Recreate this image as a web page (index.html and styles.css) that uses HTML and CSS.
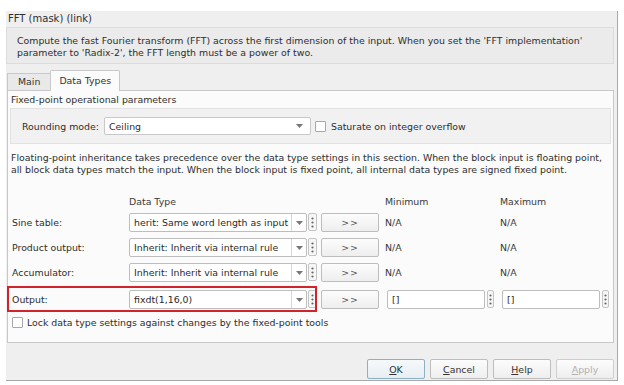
FILE: index.html
```html
<!DOCTYPE html>
<html>
<head>
<meta charset="utf-8">
<link rel="stylesheet" href="styles.css">
</head>
<body>
<div class="dialog">
  <div class="title">FFT (mask) (link)</div>
  <div class="desc">Compute the fast Fourier transform (FFT) across the first dimension of the input. When you set the 'FFT implementation'<br>parameter to 'Radix-2', the FFT length must be a power of two.</div>
  <div class="tabs">
    <div class="tab">Main</div>
    <div class="tab active">Data Types</div>
  </div>
  <div class="panel">
    <div class="section-title">Fixed-point operational parameters</div>
    <div class="group">
      <span class="label">Rounding mode:</span>
      <div class="select rounding"><span class="value">Ceiling</span><span class="arrow"><svg width="7" height="4" viewBox="0 0 7 4"><path d="M0 0h7L3.5 4z" fill="#777"/></svg></span></div>
      <label class="check"><span class="box"></span>Saturate on integer overflow</label>
    </div>
    <p class="note">Floating-point inheritance takes precedence over the data type settings in this section. When the block input is floating point,<br>all block data types match the input. When the block input is fixed point, all internal data types are signed fixed point.</p>
    <div class="dt">
      <div class="dt-row head">
        <span></span>
        <span class="col-dt">Data Type</span>
        <span></span>
        <span>Minimum</span>
        <span>Maximum</span>
      </div>
      <div class="dt-row">
        <span class="label">Sine table:</span>
        <div class="dt-cell"><div class="select"><span class="value">herit: Same word length as input</span><span class="arrow"><svg width="7" height="4" viewBox="0 0 7 4"><path d="M0 0h7L3.5 4z" fill="#777"/></svg></span></div><span class="kebab"><svg width="3" height="11" viewBox="0 0 3 11"><circle cx="1.5" cy="1.5" r="1.1" fill="#666"/><circle cx="1.5" cy="5.5" r="1.1" fill="#666"/><circle cx="1.5" cy="9.5" r="1.1" fill="#666"/></svg></span></div>
        <button class="btn assist">&gt;&gt;</button>
        <span class="na">N/A</span>
        <span class="na">N/A</span>
      </div>
      <div class="dt-row">
        <span class="label">Product output:</span>
        <div class="dt-cell"><div class="select"><span class="value">Inherit: Inherit via internal rule</span><span class="arrow"><svg width="7" height="4" viewBox="0 0 7 4"><path d="M0 0h7L3.5 4z" fill="#777"/></svg></span></div><span class="kebab"><svg width="3" height="11" viewBox="0 0 3 11"><circle cx="1.5" cy="1.5" r="1.1" fill="#666"/><circle cx="1.5" cy="5.5" r="1.1" fill="#666"/><circle cx="1.5" cy="9.5" r="1.1" fill="#666"/></svg></span></div>
        <button class="btn assist">&gt;&gt;</button>
        <span class="na">N/A</span>
        <span class="na">N/A</span>
      </div>
      <div class="dt-row">
        <span class="label">Accumulator:</span>
        <div class="dt-cell"><div class="select"><span class="value">Inherit: Inherit via internal rule</span><span class="arrow"><svg width="7" height="4" viewBox="0 0 7 4"><path d="M0 0h7L3.5 4z" fill="#777"/></svg></span></div><span class="kebab"><svg width="3" height="11" viewBox="0 0 3 11"><circle cx="1.5" cy="1.5" r="1.1" fill="#666"/><circle cx="1.5" cy="5.5" r="1.1" fill="#666"/><circle cx="1.5" cy="9.5" r="1.1" fill="#666"/></svg></span></div>
        <button class="btn assist">&gt;&gt;</button>
        <span class="na">N/A</span>
        <span class="na">N/A</span>
      </div>
      <div class="dt-row output">
        <span class="highlight"></span>
        <span class="label">Output:</span>
        <div class="dt-cell"><div class="select"><span class="value">fixdt(1,16,0)</span><span class="arrow"><svg width="7" height="4" viewBox="0 0 7 4"><path d="M0 0h7L3.5 4z" fill="#777"/></svg></span></div><span class="kebab"><svg width="3" height="11" viewBox="0 0 3 11"><circle cx="1.5" cy="1.5" r="1.1" fill="#666"/><circle cx="1.5" cy="5.5" r="1.1" fill="#666"/><circle cx="1.5" cy="9.5" r="1.1" fill="#666"/></svg></span></div>
        <button class="btn assist">&gt;&gt;</button>
        <div class="field-cell"><span class="field">[]</span><span class="kebab"><svg width="3" height="11" viewBox="0 0 3 11"><circle cx="1.5" cy="1.5" r="1.1" fill="#666"/><circle cx="1.5" cy="5.5" r="1.1" fill="#666"/><circle cx="1.5" cy="9.5" r="1.1" fill="#666"/></svg></span></div>
        <div class="field-cell"><span class="field">[]</span><span class="kebab"><svg width="3" height="11" viewBox="0 0 3 11"><circle cx="1.5" cy="1.5" r="1.1" fill="#666"/><circle cx="1.5" cy="5.5" r="1.1" fill="#666"/><circle cx="1.5" cy="9.5" r="1.1" fill="#666"/></svg></span></div>
      </div>
    </div>
    <label class="check lock"><span class="box"></span>Lock data type settings against changes by the fixed-point tools</label>
  </div>
  <div class="buttons">
    <button class="btn dlg default"><u>O</u>K</button>
    <button class="btn dlg"><u>C</u>ancel</button>
    <button class="btn dlg"><u>H</u>elp</button>
    <button class="btn dlg disabled"><u>A</u>pply</button>
  </div>
</div>
</body>
</html>
```

FILE: styles.css
```css
* { box-sizing: border-box; }
html, body { margin: 0; padding: 0; background: #ffffff; }
body {
  font-family: "DejaVu Sans", "Liberation Sans", sans-serif;
  font-size: 9.4px;
  color: #2e2e2e;
}
.dialog {
  margin: 11px 0 0 6px;
  width: 612px;
  height: 370px;
  background: #efefef;
  border-right: 1px solid #a9a9a9;
  border-bottom: 1px solid #a9a9a9;
  display: flex;
  flex-direction: column;
}
.title {
  height: 16px;
  line-height: 16px;
  padding-left: 2px;
  font-size: 10px;
}
.desc {
  height: 37px;
  margin-right: 3px;
  border: 1px solid #dcdcdc;
  background: #ebebeb;
  padding: 7px 10px 0 10px;
  line-height: 12px;
  white-space: nowrap;
}
.tabs {
  display: flex;
  align-items: flex-end;
  margin: 6px 0 0 1px;
  height: 20px;
  position: relative;
  z-index: 1;
}
.tab {
  height: 17px;
  line-height: 16px;
  padding: 0 10px;
  border: 1px solid #c9c9c9;
  border-bottom: none;
  border-right: none;
  background: #e9e9e9;
  color: #333;
}
.tab.active {
  height: 21px;
  line-height: 20px;
  padding: 0 8px;
  background: #fbfbfb;
  border-right: 1px solid #c9c9c9;
  margin-bottom: -1px;
  border-radius: 2px 2px 0 0;
}
.panel {
  margin: 0 3px 0 1px;
  height: 253px;
  border: 1px solid #c9c9c9;
  background: #fbfbfb;
  padding: 3px 2px 0 2px;
  display: flex;
  flex-direction: column;
}
.section-title {
  line-height: 12px;
  padding-left: 1px;
}
.group {
  margin-top: 2px;
  height: 36px;
  border: 1px solid #e2e2e2;
  background: #f1f1f1;
  display: flex;
  align-items: center;
  padding-left: 11px;
}
.group .label { width: 82px; }
.select {
  display: flex;
  height: 19px;
  border: 1px solid #bdbdbd;
  background: #ffffff;
  border-radius: 2px;
  align-items: stretch;
}
.select .value {
  flex: 1;
  padding-left: 4px;
  line-height: 17px;
  overflow: hidden;
  white-space: nowrap;
}
.select .arrow {
  width: 15px;
  border-left: 1px solid #d6d6d6;
  display: flex;
  align-items: center;
  justify-content: center;
}
.select.rounding {
  width: 207px;
  height: 18px;
  border-color: #c8c8c8;
}
.select.rounding .arrow { border-left: none; width: 22px; }
.check {
  display: flex;
  align-items: center;
  gap: 5px;
}
.group .check { margin-left: 4px; }
.box {
  width: 11px;
  height: 11px;
  border: 1px solid #a8a8a8;
  background: #ffffff;
  border-radius: 1px;
}
.note {
  margin: 8px 0 0 1px;
  line-height: 11.5px;
  white-space: nowrap;
}
.dt {
  margin-top: 19px;
  display: flex;
  flex-direction: column;
  gap: 6px;
}
.dt-row {
  display: grid;
  grid-template-columns: 117px 189px 67px 115px 110px;
  align-items: center;
  height: 19px;
  padding-left: 2px;
  position: relative;
}
.dt-row.head { height: 14px; color: #3a3a3a; margin-bottom: -1px; }
.dt-cell {
  display: flex;
  align-items: stretch;
  height: 19px;
}
.dt-cell .select { width: 178px; }
.dt-row .select .value { color: #2a2a2a; }
.kebab {
  width: 9px;
  height: 18px;
  margin-left: 1px;
  border: 1px solid #c4c4c4;
  border-radius: 2px;
  background: #f6f6f6;
  display: flex;
  align-items: center;
  justify-content: center;
}
.btn {
  font-family: inherit;
  font-size: 9.4px;
  color: #333;
  border: 1px solid #bdbdbd;
  border-radius: 2px;
  background: linear-gradient(#fcfcfc, #eeeeee);
  padding: 0;
}
.btn.assist {
  width: 58px;
  height: 19px;
  margin-left: 3px;
  color: #555;
  letter-spacing: 1px;
}
.na { color: #3a3a3a; }
.dt-row.output { margin-top: 2px; }
.field-cell {
  display: flex;
  height: 19px;
  align-items: stretch;
  margin-left: 2px;
}
.field {
  width: 98px;
  border: 1px solid #bdbdbd;
  border-radius: 2px;
  background: #ffffff;
  line-height: 17px;
  padding-left: 4px;
}
.field-cell .kebab { margin-left: 2px; width: 7px; }
.highlight {
  position: absolute;
  left: -3px;
  top: -4px;
  width: 310px;
  height: 26px;
  border: 2px solid #d3232a;
  pointer-events: none;
}
.lock {
  margin: 8px 0 0 2px;
  gap: 4px;
}
.buttons {
  margin-top: 16px;
  display: flex;
  justify-content: flex-end;
  gap: 5px;
  padding-right: 3px;
}
.btn.dlg {
  width: 58px;
  height: 20px;
}
.btn.dlg u { text-decoration: underline; }
.btn.default {
  border-color: #8eb0c6;
  background: linear-gradient(#f6f9fb, #e7eef3);
}
.btn.disabled { color: #b1b1b1; border-color: #cfcfcf; }
```
